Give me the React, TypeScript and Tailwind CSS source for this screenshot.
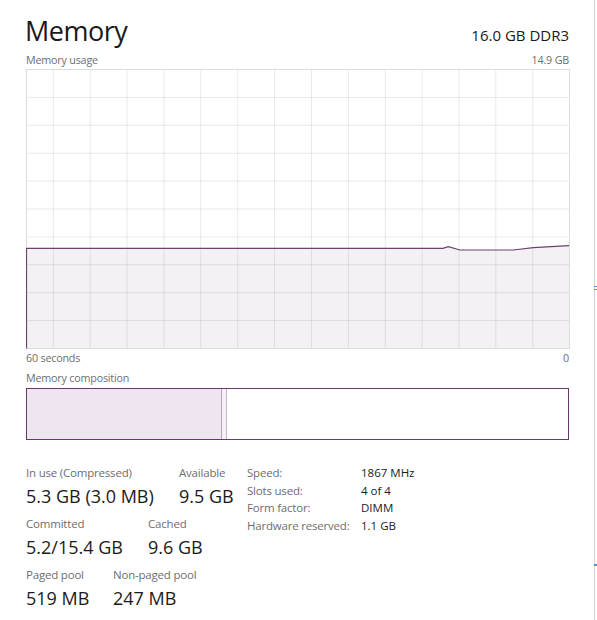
import React from "react";

const W = 544;
const H = 280;

function UsageChart() {
  const hLines = Array.from({ length: 11 }, (_, k) => 0.5 + 27.9 * k);
  const vLines = Array.from({ length: 14 }, (_, k) => 27.3 + 36.88 * k);
  const pts: [number, number][] = [
    [0.5, 179.3],
    [417, 179.3],
    [422.3, 177.7],
    [434, 181],
    [487.3, 181],
    [507.3, 178.7],
    [543, 176.7],
  ];
  const line = pts.map((p, i) => `${i ? "L" : "M"}${p[0]},${p[1]}`).join(" ");
  const area = `${line} L543,279.5 L0.5,279.5 Z`;
  return (
    <svg width={W} height={H} viewBox={`0 0 ${W} ${H}`} className="block">
      <rect x="0" y="0" width={W} height={H} fill="#ffffff" />
      <path d={area} fill="#f3f1f3" />
      {hLines.map((y, i) => (
        <line key={"h" + i} x1="0" x2={W} y1={y} y2={y} stroke="#000" strokeOpacity="0.085" strokeWidth="1" />
      ))}
      {vLines.map((x, i) => (
        <line key={"v" + i} x1={x} x2={x} y1="0" y2={H} stroke="#000" strokeOpacity="0.085" strokeWidth="1" />
      ))}
      <rect x="0.5" y="0.5" width={W - 1} height={H - 1} fill="none" stroke="#dcdcdc" strokeWidth="1" />
      <path d={`M0.5,279.5 L0.5,179.3 ${line.replace(/^M0\.5,179\.3/, "")}`} fill="none" stroke="#6f3f73" strokeWidth="1.2" />
    </svg>
  );
}

function Stat({ label, value, w }: { label: string; value: string; w?: string }) {
  return (
    <div className={w}>
      <div className="text-[11.5px] leading-[16px] tracking-[-0.2px] text-[#6e6e6e] whitespace-nowrap">{label}</div>
      <div className="mt-[3px] text-[18px] leading-[24px] text-[#1b1b1b] whitespace-nowrap">{value}</div>
    </div>
  );
}

export default function App() {
  return (
    <div className="relative w-[597px] h-[620px] bg-white overflow-hidden font-['Open_Sans',sans-serif]">
      <div className="absolute left-[594px] top-0 bottom-0 w-px bg-[#d2d2d2]" />
      <div className="absolute left-[594px] top-[286px] w-[3px] h-[1px] bg-[#5b8bd0]" />
      <div className="absolute left-[594px] top-[289px] w-[3px] h-[1px] bg-[#5b8bd0]" />
      <div className="absolute left-[594px] top-[564px] w-[3px] h-[2px] bg-[#5b8bd0]" />

      <div className="ml-[26px] w-[543px]">
        <div className="pt-[17px] flex justify-between items-baseline">
          <div className="-ml-[1px] text-[27px] leading-[27px] tracking-[-0.5px] text-[#1a1a1a]">Memory</div>
          <div className="text-[15px] leading-[20px] text-[#1a1a1a]">16.0 GB DDR3</div>
        </div>

        <div className="mt-[8px] flex justify-between text-[10.75px] leading-[14px] text-[#6e6e6e] tracking-[-0.2px]">
          <span>Memory usage</span>
          <span>14.9 GB</span>
        </div>

        <div className="mt-[2px]">
          <UsageChart />
        </div>

        <div className="mt-[2px] flex justify-between text-[10.75px] leading-[14px] text-[#6e6e6e] tracking-[-0.2px]">
          <span>60 seconds</span>
          <span>0</span>
        </div>

        <div className="mt-[6px] text-[10.75px] leading-[14px] text-[#6e6e6e] tracking-[-0.2px]">Memory composition</div>

        <div className="mt-[3px] h-[52px] border border-[#663a6a] flex">
          <div className="w-[194px] h-full bg-[#eee5f0]" />
          <div className="w-px h-full bg-[#bda0c0]" />
          <div className="w-[4px] h-full bg-[#f7eff8]" />
          <div className="w-px h-full bg-[#cdb5cf]" />
          <div className="flex-1 h-full bg-white" />
        </div>

        <div className="mt-[25px] flex items-start">
          <div className="w-[221px] flex flex-col gap-[8px]">
            <div className="flex">
              <Stat w="w-[153px]" label="In use (Compressed)" value="5.3 GB (3.0 MB)" />
              <Stat label="Available" value="9.5 GB" />
            </div>
            <div className="flex">
              <Stat w="w-[122px]" label="Committed" value="5.2/15.4 GB" />
              <Stat label="Cached" value="9.6 GB" />
            </div>
            <div className="flex">
              <Stat w="w-[87px]" label="Paged pool" value="519 MB" />
              <Stat label="Non-paged pool" value="247 MB" />
            </div>
          </div>
          <div className="-mt-[1px] grid grid-cols-[114px_auto] content-start text-[11.5px] leading-[17.7px] whitespace-nowrap">
            <span className="text-[#6e6e6e] tracking-[-0.2px]">Speed:</span>
            <span className="text-[#1b1b1b]">1867 MHz</span>
            <span className="text-[#6e6e6e] tracking-[-0.2px]">Slots used:</span>
            <span className="text-[#1b1b1b]">4 of 4</span>
            <span className="text-[#6e6e6e] tracking-[-0.2px]">Form factor:</span>
            <span className="text-[#1b1b1b]">DIMM</span>
            <span className="text-[#6e6e6e] tracking-[-0.2px]">Hardware reserved:</span>
            <span className="text-[#1b1b1b]">1.1 GB</span>
          </div>
        </div>
      </div>
    </div>
  );
}
